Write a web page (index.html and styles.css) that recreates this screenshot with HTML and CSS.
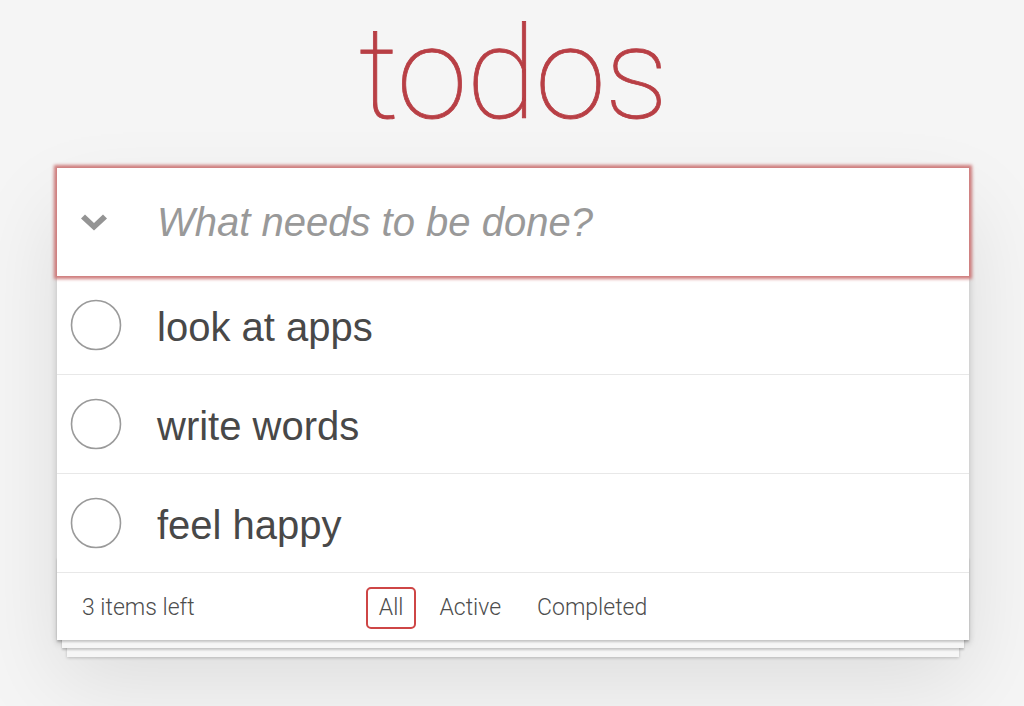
FILE: index.html
```html
<!DOCTYPE html>
<html lang="en">
<head>
<meta charset="utf-8">
<title>todos</title>
<link rel="stylesheet" href="styles.css">
</head>
<body>
<header class="masthead">
  <h1 class="title">todos</h1>
</header>
<section class="todoapp">
  <div class="new-row">
    <span class="toggle-all">
      <svg width="26" height="17" viewBox="0 0 26 17"><polygon points="0,4.5 4,0.5 13,9 22,0.5 26,4.5 13,16.5" fill="#949494"/></svg>
    </span>
    <input class="new-todo" placeholder="What needs to be done?">
  </div>
  <ul class="todo-list">
    <li class="todo">
      <span class="toggle"><svg width="52" height="52" viewBox="0 0 52 52"><circle cx="26" cy="26" r="24.5" fill="none" stroke="#9a9a9a" stroke-width="1.6"/></svg></span>
      <label class="todo-label">look at apps</label>
    </li>
    <li class="todo">
      <span class="toggle"><svg width="52" height="52" viewBox="0 0 52 52"><circle cx="26" cy="26" r="24.5" fill="none" stroke="#9a9a9a" stroke-width="1.6"/></svg></span>
      <label class="todo-label">write words</label>
    </li>
    <li class="todo">
      <span class="toggle"><svg width="52" height="52" viewBox="0 0 52 52"><circle cx="26" cy="26" r="24.5" fill="none" stroke="#9a9a9a" stroke-width="1.6"/></svg></span>
      <label class="todo-label">feel happy</label>
    </li>
  </ul>
  <footer class="footer">
    <span class="todo-count">3 items left</span>
    <ul class="filters">
      <li><a class="filter selected" href="#/">All</a></li>
      <li><a class="filter" href="#/active">Active</a></li>
      <li><a class="filter" href="#/completed">Completed</a></li>
    </ul>
    <span class="spacer"></span>
  </footer>
</section>
</body>
</html>
```

FILE: styles.css
```css
* { box-sizing: border-box; }

html, body {
  margin: 0;
  padding: 0;
}

body {
  background: #f5f5f5;
  color: #4d4d4d;
  font-family: "Liberation Sans", Arial, sans-serif;
  padding-left: 2px;
  min-height: 706px;
}

.masthead {
  height: 168px;
}

.title {
  margin: 0;
  padding-top: 10px;
  text-align: center;
  font-family: Roboto, "Liberation Sans", sans-serif;
  font-weight: 100;
  font-size: 128px;
  line-height: 1;
  letter-spacing: -1px;
  color: #b83f45;
  -webkit-text-stroke: 0.8px #b83f45;
}

.todoapp {
  width: 912px;
  margin: 0 auto;
  background: #fff;
  position: relative;
  box-shadow: 0 3px 7px 0 rgba(0, 0, 0, 0.2), 0 41px 83px 0 rgba(0, 0, 0, 0.1);
}

.new-row {
  position: relative;
  z-index: 1;
  display: flex;
  align-items: center;
  height: 108px;
  background: #fff;
  box-shadow: 0 0 3px 3px #cf7d7d;
}

.toggle-all {
  width: 50px;
  padding-left: 24px;
  display: flex;
  align-items: center;
  height: 100%;
}

.toggle-all svg { display: block; margin-top: 0px; }

.new-todo {
  flex: 1;
  height: 100%;
  border: 0;
  outline: 0;
  margin: 0;
  padding: 0 25px 0 50px;
  font-family: "Liberation Sans", Arial, sans-serif;
  font-size: 40px;
  color: #4d4d4d;
  background: transparent;
}

.new-todo::placeholder {
  font-style: italic;
  color: #999;
}

.todo-list {
  list-style: none;
  margin: 0;
  padding: 0;
}

.todo {
  display: flex;
  align-items: center;
  height: 99px;
  border-bottom: 1px solid #e8e8e8;
}

.toggle {
  width: 100px;
  padding-left: 13px;
  display: flex;
  align-items: center;
}

.toggle svg { display: block; }

.todo-label {
  font-size: 40px;
  line-height: 48px;
  padding-top: 3px;
  color: #484848;
}

.footer {
  position: relative;
  display: grid;
  grid-template-columns: 1fr auto 1fr;
  align-items: center;
  height: 67px;
  padding: 2px 25px 0;
  font-family: Roboto, "Liberation Sans", sans-serif;
  font-weight: 300;
  font-size: 23px;
  color: #4d4d4d;
}

.footer::before {
  content: "";
  position: absolute;
  left: 0;
  right: 0;
  bottom: 0;
  height: 83px;
  box-shadow:
    0 2px 2px rgba(0, 0, 0, 0.2),
    0 13px 0 -5px #f6f6f6,
    0 15px 2px -5px rgba(0, 0, 0, 0.2),
    0 27px 0 -10px #f6f6f6,
    0 28px 3px -10px rgba(0, 0, 0, 0.2);
  pointer-events: none;
}

.todo-count {
  justify-self: start;
}

.filters {
  list-style: none;
  margin: 0;
  padding: 0;
  display: flex;
}

.filter {
  display: block;
  margin: 0 5px;
  padding: 4px 11px 5px;
  line-height: 29px;
  border: 2px solid transparent;
  border-radius: 5px;
  color: inherit;
  text-decoration: none;
}

.filter.selected {
  border-color: #ce4646;
}
```
